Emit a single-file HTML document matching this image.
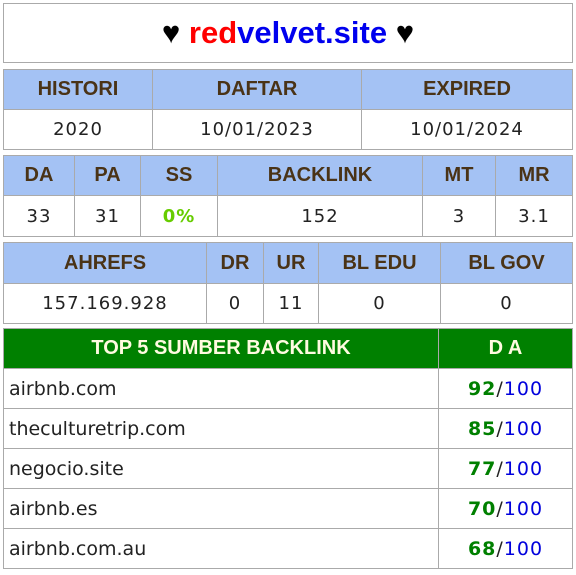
<!DOCTYPE html>
<html><head><meta charset="utf-8"><style>
body{margin:0;width:576px;height:575px;background:#fff;position:relative;font-family:"DejaVu Sans","Liberation Sans",sans-serif;overflow:hidden}
.c{position:absolute;box-sizing:border-box;border:1px solid #aaa;display:flex;align-items:center;justify-content:center;font-size:18px;color:#222;letter-spacing:1px}
.h{background:#a4c2f4;color:#4a3316;font-weight:bold;font-family:"Liberation Sans",sans-serif;font-size:20px;letter-spacing:0}
.g{background:#008000;color:#fffbe0;font-weight:bold;font-family:"Liberation Sans",sans-serif;font-size:20px;letter-spacing:0}
.l{justify-content:flex-start;padding-left:5px;font-size:19px;letter-spacing:0}
.s{font-size:19px}
.n{color:#008000;font-weight:bold}.b{color:#0000dd}
</style></head><body>
<div class="c" style="left:3px;top:3px;width:570px;height:60px;font-size:31px;font-weight:bold;color:#000;font-family:'Liberation Sans',sans-serif;letter-spacing:0">♥&nbsp;<span style="color:#f00">red</span><span style="color:#00e">velvet.site</span>&nbsp;♥</div>

<div class="c h" style="left:3px;top:69px;width:150px;height:41px">HISTORI</div>
<div class="c h" style="left:152px;top:69px;width:210px;height:41px">DAFTAR</div>
<div class="c h" style="left:361px;top:69px;width:212px;height:41px">EXPIRED</div>
<div class="c" style="left:3px;top:109px;width:150px;height:41px">2020</div>
<div class="c" style="left:152px;top:109px;width:210px;height:41px">10/01/2023</div>
<div class="c" style="left:361px;top:109px;width:212px;height:41px">10/01/2024</div>

<div class="c h" style="left:3px;top:155px;width:72px;height:41px">DA</div>
<div class="c h" style="left:74px;top:155px;width:67px;height:41px">PA</div>
<div class="c h" style="left:140px;top:155px;width:78px;height:41px">SS</div>
<div class="c h" style="left:217px;top:155px;width:206px;height:41px">BACKLINK</div>
<div class="c h" style="left:422px;top:155px;width:74px;height:41px">MT</div>
<div class="c h" style="left:495px;top:155px;width:78px;height:41px">MR</div>
<div class="c" style="left:3px;top:195px;width:72px;height:42px">33</div>
<div class="c" style="left:74px;top:195px;width:67px;height:42px">31</div>
<div class="c" style="left:140px;top:195px;width:78px;height:42px;color:#66cc00;font-weight:bold">0%</div>
<div class="c" style="left:217px;top:195px;width:206px;height:42px">152</div>
<div class="c" style="left:422px;top:195px;width:74px;height:42px">3</div>
<div class="c" style="left:495px;top:195px;width:78px;height:42px">3.1</div>

<div class="c h" style="left:3px;top:242px;width:204px;height:42px">AHREFS</div>
<div class="c h" style="left:206px;top:242px;width:58px;height:42px">DR</div>
<div class="c h" style="left:263px;top:242px;width:56px;height:42px">UR</div>
<div class="c h" style="left:318px;top:242px;width:123px;height:42px">BL EDU</div>
<div class="c h" style="left:440px;top:242px;width:133px;height:42px">BL GOV</div>
<div class="c" style="left:3px;top:283px;width:204px;height:41px">157.169.928</div>
<div class="c" style="left:206px;top:283px;width:58px;height:41px">0</div>
<div class="c" style="left:263px;top:283px;width:56px;height:41px">11</div>
<div class="c" style="left:318px;top:283px;width:123px;height:41px">0</div>
<div class="c" style="left:440px;top:283px;width:133px;height:41px">0</div>

<div class="c g" style="left:3px;top:328px;width:436px;height:41px">TOP 5 SUMBER BACKLINK</div>
<div class="c g" style="left:438px;top:328px;width:135px;height:41px">D A</div>

<div class="c l" style="left:3px;top:368px;width:436px;height:41px">airbnb.com</div>
<div class="c s" style="left:438px;top:368px;width:135px;height:41px"><span class="n">92</span>/<span class="b">100</span></div>
<div class="c l" style="left:3px;top:408px;width:436px;height:41px">theculturetrip.com</div>
<div class="c s" style="left:438px;top:408px;width:135px;height:41px"><span class="n">85</span>/<span class="b">100</span></div>
<div class="c l" style="left:3px;top:448px;width:436px;height:41px">negocio.site</div>
<div class="c s" style="left:438px;top:448px;width:135px;height:41px"><span class="n">77</span>/<span class="b">100</span></div>
<div class="c l" style="left:3px;top:488px;width:436px;height:41px">airbnb.es</div>
<div class="c s" style="left:438px;top:488px;width:135px;height:41px"><span class="n">70</span>/<span class="b">100</span></div>
<div class="c l" style="left:3px;top:528px;width:436px;height:41px">airbnb.com.au</div>
<div class="c s" style="left:438px;top:528px;width:135px;height:41px"><span class="n">68</span>/<span class="b">100</span></div>
</body></html>
